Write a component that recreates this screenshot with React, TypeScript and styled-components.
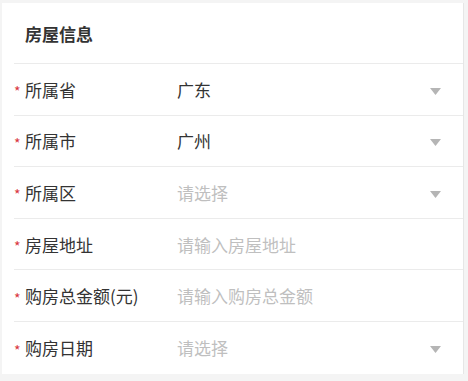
import React from "react";
import styled, { createGlobalStyle } from "styled-components";

const Global = createGlobalStyle`
  html, body {
    margin: 0;
    padding: 0;
    background: #f4f4f4;
    font-family: "Noto Sans CJK SC", "Noto Sans", sans-serif;
  }
  * { box-sizing: border-box; }
`;

const Page = styled.div`
  padding: 3px 4px 0 2px;
  height: 381px;
`;

const Panel = styled.section`
  background: #ffffff;
  border-right: 1px solid #e6e6e6;
  display: flex;
  flex-direction: column;
`;

const Header = styled.h2`
  margin: 0;
  height: 60px;
  display: flex;
  align-items: center;
  padding-left: 23px;
  font-size: 17px;
  font-weight: 700;
  color: #333333;
`;

const Row = styled.div<{ $last?: boolean }>`
  margin-left: 12px;
  height: ${(p) => (p.$last ? "53px" : "51.6px")};
  border-top: 1px solid #ebebeb;
  display: flex;
  align-items: center;
  padding-right: 22px;
`;

const Star = styled.span`
  width: 11px;
  flex: none;
  color: #d9363e;
  font-size: 14px;
  line-height: 1;
  padding-top: 4px;
  padding-left: 0px;
`;

const Label = styled.span`
  width: 152px;
  flex: none;
  font-size: 17px;
  color: #333333;
  white-space: nowrap;
`;

const Value = styled.span<{ $placeholder?: boolean }>`
  flex: 1;
  font-size: 17px;
  color: ${(p) => (p.$placeholder ? "#bfbfbf" : "#333333")};
  white-space: nowrap;
`;

const Caret = styled.svg`
  width: 11px;
  height: 7px;
  flex: none;
  margin-top: 4px;
`;

const Arrow = () => (
  <Caret viewBox="0 0 11 7">
    <path d="M0 0 H11 L5.5 7 Z" fill="#b5b5b5" />
  </Caret>
);

type Field = { label: string; value: string; placeholder?: boolean; select?: boolean };

const fields: Field[] = [
  { label: "所属省", value: "广东", select: true },
  { label: "所属市", value: "广州", select: true },
  { label: "所属区", value: "请选择", placeholder: true, select: true },
  { label: "房屋地址", value: "请输入房屋地址", placeholder: true },
  { label: "购房总金额(元)", value: "请输入购房总金额", placeholder: true },
  { label: "购房日期", value: "请选择", placeholder: true, select: true },
];

export default function App() {
  return (
    <>
      <Global />
      <Page>
        <Panel>
          <Header>房屋信息</Header>
          {fields.map((f, i) => (
            <Row key={f.label} $last={i === fields.length - 1}>
              <Star>*</Star>
              <Label>{f.label}</Label>
              <Value $placeholder={f.placeholder}>{f.value}</Value>
              {f.select && <Arrow />}
            </Row>
          ))}
        </Panel>
      </Page>
    </>
  );
}
